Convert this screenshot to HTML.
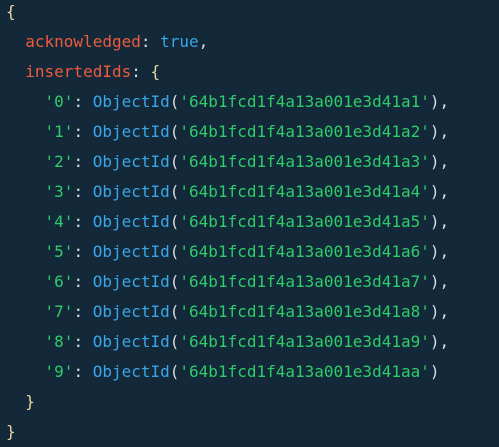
<!DOCTYPE html>
<html><head><style>
html,body{margin:0;padding:0;width:499px;height:446px;background:#13293a;overflow:hidden}
pre{margin:0;padding:0 0 0 6px;font-family:"DejaVu Sans Mono","Liberation Mono",monospace;font-size:16px;line-height:30px;color:#d6dde3;position:absolute;top:-3px;left:0}
.k{color:#f05a3c}.b{color:#3aa6e8}.s{color:#2fcc6a}.y{color:#e8d8a0}
</style></head><body><pre><span class="y">{</span>
  <span class="k">acknowledged</span>: <span class="b">true</span>,
  <span class="k">insertedIds</span>: <span class="y">{</span>
    <span class="s">'0'</span>: <span class="b">ObjectId</span>(<span class="s">'64b1fcd1f4a13a001e3d41a1'</span>),
    <span class="s">'1'</span>: <span class="b">ObjectId</span>(<span class="s">'64b1fcd1f4a13a001e3d41a2'</span>),
    <span class="s">'2'</span>: <span class="b">ObjectId</span>(<span class="s">'64b1fcd1f4a13a001e3d41a3'</span>),
    <span class="s">'3'</span>: <span class="b">ObjectId</span>(<span class="s">'64b1fcd1f4a13a001e3d41a4'</span>),
    <span class="s">'4'</span>: <span class="b">ObjectId</span>(<span class="s">'64b1fcd1f4a13a001e3d41a5'</span>),
    <span class="s">'5'</span>: <span class="b">ObjectId</span>(<span class="s">'64b1fcd1f4a13a001e3d41a6'</span>),
    <span class="s">'6'</span>: <span class="b">ObjectId</span>(<span class="s">'64b1fcd1f4a13a001e3d41a7'</span>),
    <span class="s">'7'</span>: <span class="b">ObjectId</span>(<span class="s">'64b1fcd1f4a13a001e3d41a8'</span>),
    <span class="s">'8'</span>: <span class="b">ObjectId</span>(<span class="s">'64b1fcd1f4a13a001e3d41a9'</span>),
    <span class="s">'9'</span>: <span class="b">ObjectId</span>(<span class="s">'64b1fcd1f4a13a001e3d41aa'</span>)
  <span class="y">}</span>
<span class="y">}</span></pre></body></html>
